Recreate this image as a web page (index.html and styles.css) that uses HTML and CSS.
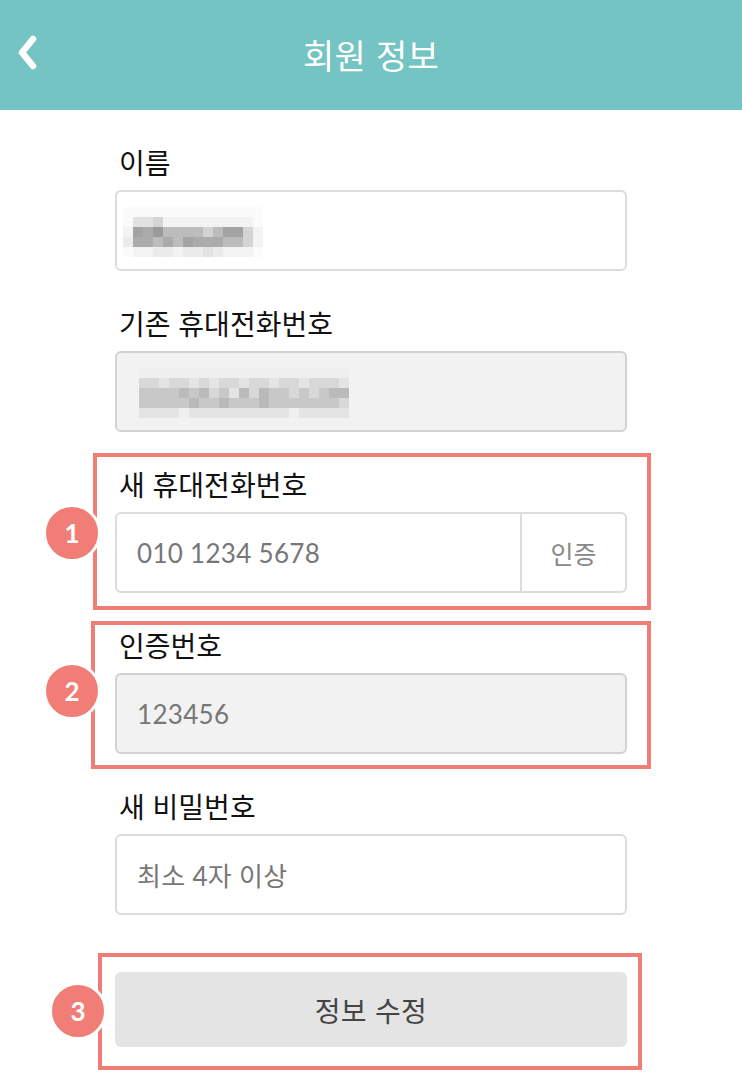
FILE: index.html
```html
<!DOCTYPE html>
<html lang="ko">
<head>
<meta charset="utf-8">
<title>회원 정보</title>
<link rel="stylesheet" href="styles.css">
</head>
<body>
<header class="topbar">
  <div class="topbar-side">
    <svg class="back" width="40" height="50" viewBox="0 0 40 50" aria-hidden="true">
      <polyline points="16,7 5,20.5 16,34" fill="none" stroke="#fff" stroke-width="6.5" stroke-linecap="round" stroke-linejoin="round"/>
    </svg>
  </div>
  <h1 class="title">회원 정보</h1>
  <div class="topbar-side"></div>
</header>

<main class="form">
  <div class="field">
    <div class="label">이름</div>
    <div class="input">
      <div class="mosaic m-name">
        <span class="s0"></span><span class="s0"></span><span class="s0"></span><span class="s0"></span><span class="s0"></span><span class="s0"></span><span class="s0"></span><span class="s0"></span><span class="s0"></span><span class="s0"></span><span class="s0"></span><span class="s0"></span><span class="s0"></span><span class="s0"></span>
        <span class="s0"></span><span class="s3"></span><span class="s3"></span><span class="s4"></span><span class="s1"></span><span class="s1"></span><span class="s1"></span><span class="s1"></span><span class="s1"></span><span class="s1"></span><span class="s1"></span><span class="s1"></span><span class="s1"></span><span class="s0"></span>
        <span class="s1"></span><span class="s7"></span><span class="s6"></span><span class="s8"></span><span class="s5"></span><span class="s5"></span><span class="s5"></span><span class="s5"></span><span class="s4"></span><span class="s5"></span><span class="s7"></span><span class="s7"></span><span class="s4"></span><span class="s1"></span>
        <span class="s2"></span><span class="s6"></span><span class="s6"></span><span class="s5"></span><span class="s6"></span><span class="s5"></span><span class="s7"></span><span class="s6"></span><span class="s6"></span><span class="s6"></span><span class="s5"></span><span class="s5"></span><span class="s4"></span><span class="s1"></span>
        <span class="s0"></span><span class="s1"></span><span class="s1"></span><span class="s2"></span><span class="s2"></span><span class="s1"></span><span class="s2"></span><span class="s2"></span><span class="s3"></span><span class="s2"></span><span class="s1"></span><span class="s1"></span><span class="s1"></span><span class="s0"></span>
      </div>
    </div>
  </div>

  <div class="field">
    <div class="label">기존 휴대전화번호</div>
    <div class="input is-locked">
      <div class="mosaic m-phone">
        <span class="g1"></span><span class="g1"></span><span class="g1"></span><span class="g1"></span><span class="g1"></span><span class="g1"></span><span class="g1"></span><span class="g1"></span><span class="g1"></span><span class="g1"></span><span class="g1"></span><span class="g1"></span><span class="g1"></span><span class="g1"></span><span class="g1"></span><span class="g1"></span><span class="g1"></span><span class="g1"></span><span class="g1"></span><span class="g1"></span><span class="g1"></span>
        <span class="g3"></span><span class="g3"></span><span class="g2"></span><span class="g3"></span><span class="g3"></span><span class="g2"></span><span class="g3"></span><span class="g2"></span><span class="g3"></span><span class="g3"></span><span class="g2"></span><span class="g3"></span><span class="g3"></span><span class="g2"></span><span class="g3"></span><span class="g3"></span><span class="g2"></span><span class="g3"></span><span class="g3"></span><span class="g3"></span><span class="g2"></span>
        <span class="g4"></span><span class="g4"></span><span class="g4"></span><span class="g4"></span><span class="g5"></span><span class="g4"></span><span class="g5"></span><span class="g3"></span><span class="g4"></span><span class="g2"></span><span class="g5"></span><span class="g3"></span><span class="g5"></span><span class="g4"></span><span class="g4"></span><span class="g3"></span><span class="g4"></span><span class="g3"></span><span class="g4"></span><span class="g5"></span><span class="g5"></span>
        <span class="g4"></span><span class="g4"></span><span class="g4"></span><span class="g4"></span><span class="g4"></span><span class="g5"></span><span class="g4"></span><span class="g4"></span><span class="g5"></span><span class="g4"></span><span class="g4"></span><span class="g4"></span><span class="g5"></span><span class="g4"></span><span class="g4"></span><span class="g4"></span><span class="g4"></span><span class="g4"></span><span class="g4"></span><span class="g4"></span><span class="g3"></span>
        <span class="g2"></span><span class="g2"></span><span class="g2"></span><span class="g2"></span><span class="g1"></span><span class="g2"></span><span class="g2"></span><span class="g2"></span><span class="g2"></span><span class="g2"></span><span class="g2"></span><span class="g2"></span><span class="g2"></span><span class="g2"></span><span class="g2"></span><span class="g1"></span><span class="g2"></span><span class="g2"></span><span class="g2"></span><span class="g2"></span><span class="g2"></span>
      </div>
    </div>
  </div>

  <div class="field noted note-1">
    <div class="label">새 휴대전화번호</div>
    <div class="input split">
      <span class="placeholder">010 1234 5678</span>
      <span class="addon">인증</span>
    </div>
    <span class="note-box"></span>
    <span class="badge">1</span>
  </div>

  <div class="field noted note-2">
    <div class="label">인증번호</div>
    <div class="input is-locked">
      <span class="placeholder">123456</span>
    </div>
    <span class="note-box"></span>
    <span class="badge">2</span>
  </div>

  <div class="field">
    <div class="label">새 비밀번호</div>
    <div class="input">
      <span class="placeholder">최소 4자 이상</span>
    </div>
  </div>

  <div class="submit-wrap noted note-3">
    <div class="submit">정보 수정</div>
    <span class="note-box"></span>
    <span class="badge">3</span>
  </div>
</main>
</body>
</html>
```

FILE: styles.css
```css
* { box-sizing: border-box; }

html, body {
  margin: 0;
  padding: 0;
  background: #ffffff;
}

body {
  width: 742px;
  height: 1086px;
  overflow: hidden;
  font-family: Lato, "Noto Sans CJK KR", sans-serif;
  color: #111111;
}

.topbar {
  height: 110px;
  background: #73c4c3;
  display: grid;
  grid-template-columns: 1fr auto 1fr;
  align-items: center;
}

.topbar-side {
  display: flex;
  align-items: center;
  padding-left: 17px;
}

.back {
  display: block;
  margin-top: 4px;
}

.title {
  margin: 0;
  font-family: "Noto Sans CJK KR", sans-serif;
  font-weight: 400;
  font-size: 34px;
  line-height: 40px;
  color: #ffffff;
  letter-spacing: 0.3px;
}

.form {
  width: 512px;
  margin: 0 auto;
  padding-top: 34px;
  display: flex;
  flex-direction: column;
}

.field {
  margin-bottom: 34px;
}

.label {
  font-family: "Noto Sans CJK KR", sans-serif;
  font-size: 28px;
  line-height: 36px;
  height: 36px;
  margin-bottom: 10px;
  padding-left: 4px;
  color: #111111;
}

.input {
  height: 81px;
  border: 2px solid #dcdcdc;
  border-radius: 6px;
  background: #ffffff;
  display: flex;
  align-items: center;
  padding-left: 20px;
}

.input.is-locked {
  background: #f2f2f2;
  border-color: #d2d2d2;
}

.placeholder {
  font-size: 26px;
  color: #777777;
  font-family: Lato, "Noto Sans CJK KR", sans-serif;
  letter-spacing: 0.3px;
}

.split .placeholder {
  flex: 1;
}

.addon {
  width: 105px;
  align-self: stretch;
  border-left: 2px solid #dcdcdc;
  display: flex;
  align-items: center;
  justify-content: center;
  font-family: "Noto Sans CJK KR", sans-serif;
  font-size: 25px;
  color: #888888;
}

/* pixelated (blurred-out) personal data */
.mosaic {
  display: grid;
  grid-auto-rows: 10px;
}

.m-name {
  grid-template-columns: repeat(14, 10px);
  margin-left: -14px;
  margin-top: 2px;
}

.m-phone {
  grid-template-columns: repeat(21, 10px);
  margin-left: 2px;
  margin-top: 2px;
}

.s0 { background: #fbfbfb; }
.s1 { background: #f3f3f3; }
.s2 { background: #ebebeb; }
.s3 { background: #e2e2e2; }
.s4 { background: #d4d4d4; }
.s5 { background: #bcbcbc; }
.s6 { background: #ababab; }
.s7 { background: #a3a3a3; }
.s8 { background: #9a9a9a; }

.g1 { background: #efefef; }
.g2 { background: #e4e4e4; }
.g3 { background: #d8d8d8; }
.g4 { background: #c8c8c8; }
.g5 { background: #bababa; }

.submit-wrap {
  margin-top: 23px;
}

.submit {
  height: 75px;
  border-radius: 6px;
  background: #e4e4e4;
  display: flex;
  align-items: center;
  justify-content: center;
  font-family: "Noto Sans CJK KR", sans-serif;
  font-size: 28px;
  color: #444444;
  letter-spacing: 0.3px;
}

/* annotation overlays */
.noted {
  position: relative;
}

.note-box {
  position: absolute;
  border: 4px solid #f07e77;
  pointer-events: none;
}

.badge {
  position: absolute;
  width: 58px;
  height: 58px;
  border-radius: 50%;
  background: #f07e77;
  border: 3px solid #ffffff;
  display: flex;
  align-items: center;
  justify-content: center;
  color: #ffffff;
  font-family: Lato, sans-serif;
  font-weight: 700;
  font-size: 26px;
  line-height: 1;
}

.note-1 .note-box { top: -13px; left: -22px; right: -24px; bottom: -17px; }
.note-1 .badge { top: 38px; left: -72px; }

.note-2 .note-box { top: -6px; left: -24px; right: -24px; bottom: -15px; }
.note-2 .badge { top: 35px; left: -72px; }

.note-3 .note-box { top: -19px; left: -17px; right: -15px; bottom: -23px; }
.note-3 .badge { top: 10px; left: -66px; }
```
